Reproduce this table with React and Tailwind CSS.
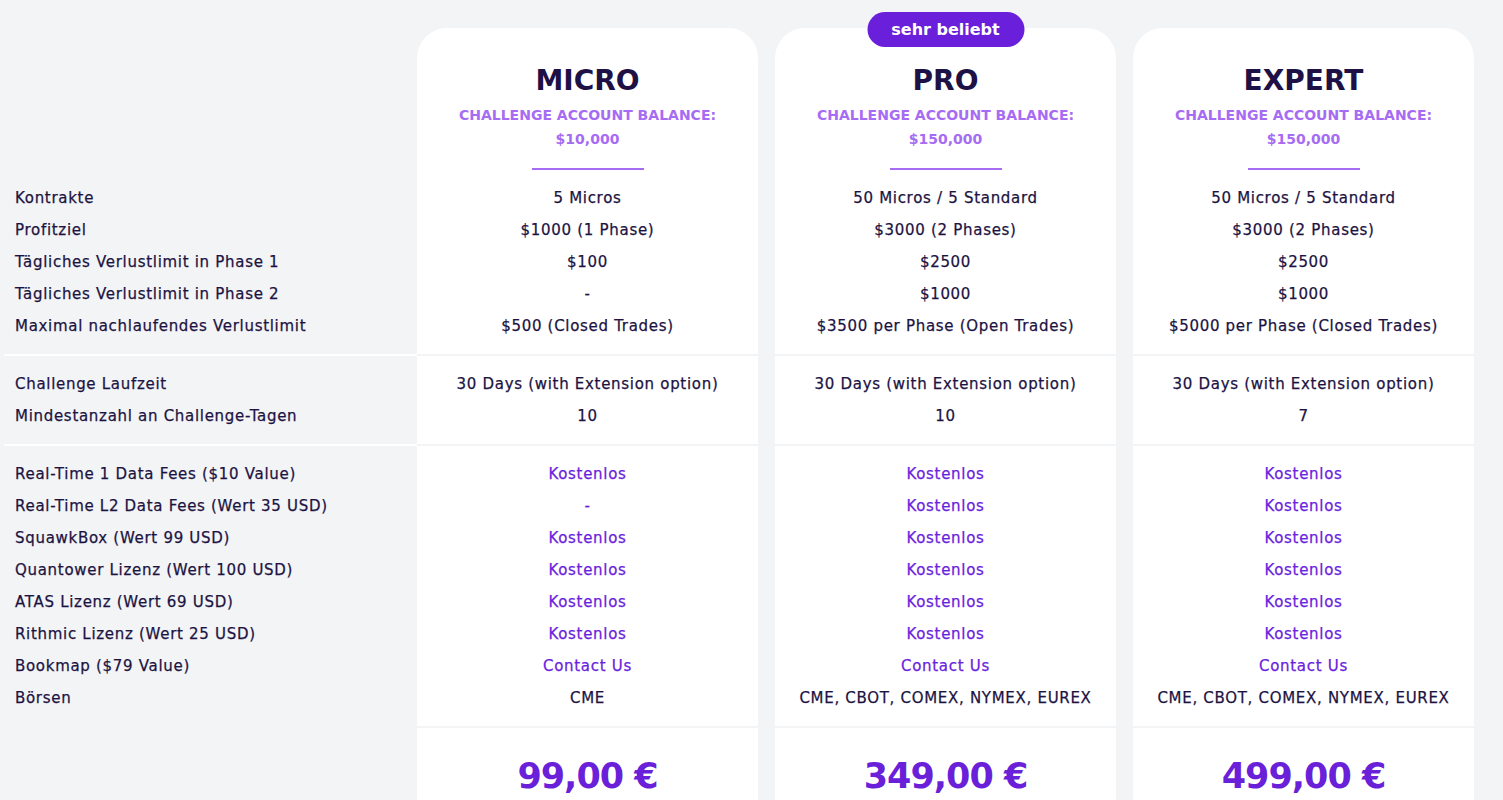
import React from 'react';

const font = { fontFamily: '"DejaVu Sans", "Open Sans", sans-serif' };

const labels1 = [
  'Kontrakte',
  'Profitziel',
  'Tägliches Verlustlimit in Phase 1',
  'Tägliches Verlustlimit in Phase 2',
  'Maximal nachlaufendes Verlustlimit',
];
const labels2 = ['Challenge Laufzeit', 'Mindestanzahl an Challenge-Tagen'];
const labels3 = [
  'Real-Time 1 Data Fees ($10 Value)',
  'Real-Time L2 Data Fees (Wert 35 USD)',
  'SquawkBox (Wert 99 USD)',
  'Quantower Lizenz (Wert 100 USD)',
  'ATAS Lizenz (Wert 69 USD)',
  'Rithmic Lizenz (Wert 25 USD)',
  'Bookmap ($79 Value)',
  'Börsen',
];

const plans = [
  {
    name: 'MICRO',
    balance: '$10,000',
    g1: ['5 Micros', '$1000 (1 Phase)', '$100', '-', '$500 (Closed Trades)'],
    g2: ['30 Days (with Extension option)', '10'],
    g3: [
      ['Kostenlos', 'link'],
      ['-', 'link'],
      ['Kostenlos', 'link'],
      ['Kostenlos', 'link'],
      ['Kostenlos', 'link'],
      ['Kostenlos', 'link'],
      ['Contact Us', 'link'],
      ['CME', 'dark'],
    ],
    price: '99,00 €',
  },
  {
    name: 'PRO',
    badge: 'sehr beliebt',
    balance: '$150,000',
    g1: ['50 Micros / 5 Standard', '$3000 (2 Phases)', '$2500', '$1000', '$3500 per Phase (Open Trades)'],
    g2: ['30 Days (with Extension option)', '10'],
    g3: [
      ['Kostenlos', 'link'],
      ['Kostenlos', 'link'],
      ['Kostenlos', 'link'],
      ['Kostenlos', 'link'],
      ['Kostenlos', 'link'],
      ['Kostenlos', 'link'],
      ['Contact Us', 'link'],
      ['CME, CBOT, COMEX, NYMEX, EUREX', 'dark'],
    ],
    price: '349,00 €',
  },
  {
    name: 'EXPERT',
    balance: '$150,000',
    g1: ['50 Micros / 5 Standard', '$3000 (2 Phases)', '$2500', '$1000', '$5000 per Phase (Closed Trades)'],
    g2: ['30 Days (with Extension option)', '7'],
    g3: [
      ['Kostenlos', 'link'],
      ['Kostenlos', 'link'],
      ['Kostenlos', 'link'],
      ['Kostenlos', 'link'],
      ['Kostenlos', 'link'],
      ['Kostenlos', 'link'],
      ['Contact Us', 'link'],
      ['CME, CBOT, COMEX, NYMEX, EUREX', 'dark'],
    ],
    price: '499,00 €',
  },
];

const Label = ({ children }) => (
  <div className="h-8 pt-[2px] flex items-center pl-[15px] text-[15px] tracking-[0.7px] text-[#1c1342] [-webkit-text-stroke:0.25px] whitespace-nowrap">
    {children}
  </div>
);

const Cell = ({ children, tone = 'dark' }) => (
  <div
    className={`h-8 pt-[2px] flex items-center justify-center text-[15px] tracking-[0.7px] [-webkit-text-stroke:0.25px] whitespace-nowrap ${
      tone === 'link' ? 'text-[#6a22de]' : 'text-[#1c1342]'
    }`}
  >
    {children}
  </div>
);

const PlanCard = ({ plan }) => (
  <div className="relative w-[341px] bg-white rounded-t-[30px] flex flex-col">
    {plan.badge && (
      <div className="absolute -top-4 left-1/2 -translate-x-1/2 w-[157px] h-[35px] rounded-full bg-[#6a1fdb] text-white text-[16px] font-bold flex items-center justify-center">
        {plan.badge}
      </div>
    )}

    {/* Header */}
    <div className="h-[153px] flex flex-col items-center pt-[36px]">
      <h2 className="text-[28px] leading-[34px] font-bold text-[#1d1145]">{plan.name}</h2>
      <p className="mt-[5px] text-[14px] leading-6 font-bold text-[#a66cf3] text-center">
        CHALLENGE ACCOUNT BALANCE:
        <br />
        {plan.balance}
      </p>
      <div className="mt-[17px] w-[112px] h-[2px] bg-[#a66cf3]" />
    </div>

    <div className="pb-[13px]">
      {plan.g1.map((v, i) => (
        <Cell key={i}>{v}</Cell>
      ))}
    </div>
    <div className="h-[2px] bg-[#f3f4f6]" />
    <div className="pt-[11px] pb-[13px]">
      {plan.g2.map((v, i) => (
        <Cell key={i}>{v}</Cell>
      ))}
    </div>
    <div className="h-[2px] bg-[#f3f4f6]" />
    <div className="pt-[11px] pb-[13px]">
      {plan.g3.map(([v, tone], i) => (
        <Cell key={i} tone={tone}>{v}</Cell>
      ))}
    </div>
    <div className="h-[2px] bg-[#f3f4f6]" />

    {/* Price */}
    <div className="pt-[26px] pb-10 flex justify-center">
      <span className="text-[35px] leading-[44px] tracking-[-1px] font-bold text-[#6a1fd9]">{plan.price}</span>
    </div>
  </div>
);

export default function App() {
  return (
    <div className="min-h-screen bg-[#f3f4f6] overflow-hidden" style={font}>
      <div className="flex pt-[28px]">
        {/* Labels column */}
        <div className="w-[417px] shrink-0 flex flex-col">
          <div className="h-[153px]" />
          <div className="pb-[13px]">
            {labels1.map((l) => (
              <Label key={l}>{l}</Label>
            ))}
          </div>
          <div className="h-[2px] bg-white ml-[4px]" />
          <div className="pt-[11px] pb-[13px]">
            {labels2.map((l) => (
              <Label key={l}>{l}</Label>
            ))}
          </div>
          <div className="h-[2px] bg-white ml-[4px]" />
          <div className="pt-[11px] pb-[13px]">
            {labels3.map((l) => (
              <Label key={l}>{l}</Label>
            ))}
          </div>
        </div>

        <div className="flex gap-[17px]">
          {plans.map((p) => (
            <PlanCard key={p.name} plan={p} />
          ))}
        </div>
      </div>
    </div>
  );
}
